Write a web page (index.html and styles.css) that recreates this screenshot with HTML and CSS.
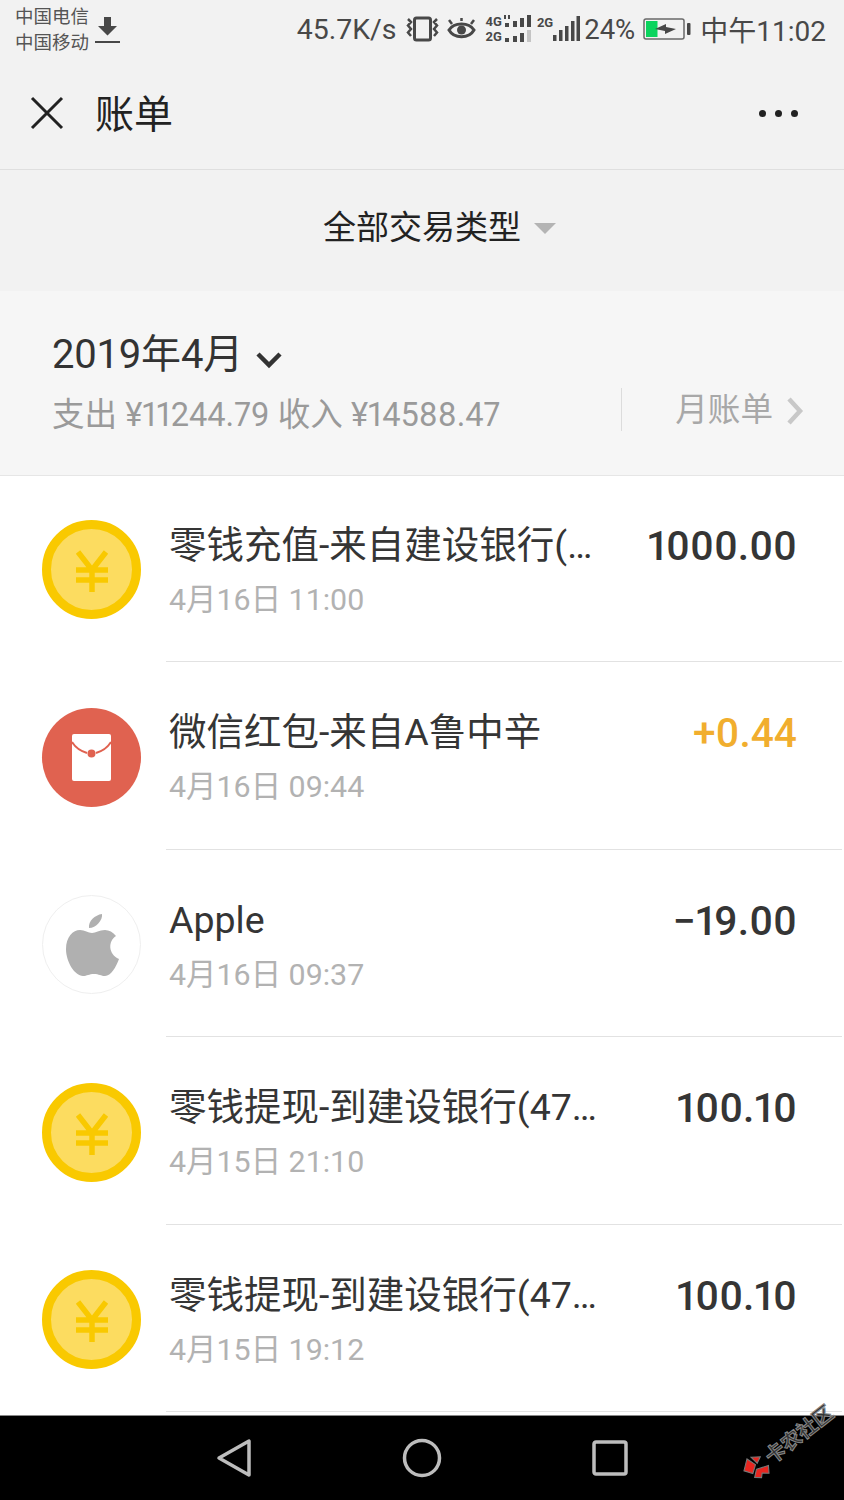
FILE: index.html
```html
<!DOCTYPE html>
<html lang="zh-CN">
<head>
    <meta charset="UTF-8">
    <meta name="viewport" content="width=device-width, initial-scale=1.0">
    <title>账单</title>
    <link rel="stylesheet" href="styles.css">
</head>
<body>
    <div class="status-bar">
        <div class="status-left">
            <div class="carriers">
                <div>中国电信</div>
                <div>中国移动</div>
            </div>
            <svg class="download-icon" width="28" height="30" viewBox="0 0 28 30">
                <path d="M10 2h7v9h6l-9.500 9.500L4 11h6z" fill="#484848"/>
                <rect x="1" y="26" width="25" height="2" fill="#484848"/>
            </svg>
        </div>
        <div class="status-right">
            <span class="speed">45.7K/s</span>
            <svg class="vibrate-icon" width="35" height="28" viewBox="0 0 35 28">
                <rect x="9.500" y="3" width="16" height="22" rx="2" fill="none" stroke="#484848" stroke-width="3"/>
                <path d="M3 4l3 3-3 3.500 3 3.500-3 3.500 3 3.500M32 4l-3 3 3 3.500-3 3.500 3 3.500-3 3.500" fill="none" stroke="#484848" stroke-width="2.500"/>
            </svg>
            <svg class="eye-icon" width="29" height="24" viewBox="0 0 29 24">
                <path d="M2 13c5-8 20-8 25 0-5 9-20 9-25 0z" fill="none" stroke="#484848" stroke-width="3"/>
                <circle cx="14.500" cy="13" r="4.500" fill="#484848"/>
                <path d="M5 7L2 3M24 7l3-4M14.500 4V1" stroke="#484848" stroke-width="2.500"/>
            </svg>
            <div class="signal-double">
                <div class="signal-line">
                    <span class="net-label">4G</span>
                    <svg width="30" height="13" viewBox="0 0 30 13">
                        <path d="M1 0h2v4H1zM5 0h2v4H5z" fill="#484848"/>
                        <rect x="2" y="8" width="4" height="4" fill="#484848"/>
                        <rect x="10" y="6" width="4" height="6" fill="#484848"/>
                        <rect x="17" y="3" width="4" height="9" fill="#484848"/>
                        <rect x="24" y="0" width="4" height="12" fill="#484848"/>
                    </svg>
                </div>
                <div class="signal-line">
                    <span class="net-label">2G</span>
                    <svg width="30" height="13" viewBox="0 0 30 13">
                        <rect x="2" y="8" width="4" height="4" fill="#484848"/>
                        <rect x="10" y="6" width="4" height="6" fill="#484848"/>
                        <rect x="17" y="3" width="4" height="9" fill="#484848"/>
                        <rect x="24" y="0" width="4" height="12" fill="#c4c4c4"/>
                    </svg>
                </div>
            </div>
            <div class="signal-single">
                <span class="net-label net-label-top">2G</span>
                <svg width="28" height="26" viewBox="0 0 28 26">
                    <rect x="1" y="19" width="3.500" height="6" fill="#484848"/>
                    <rect x="7" y="14" width="3.500" height="11" fill="#484848"/>
                    <rect x="13" y="10" width="3.500" height="15" fill="#484848"/>
                    <rect x="19" y="5" width="3.500" height="20" fill="#484848"/>
                    <rect x="24.500" y="0" width="3.500" height="25" fill="#484848"/>
                </svg>
            </div>
            <span class="battery-text">24%</span>
            <svg class="battery-icon" width="48" height="24" viewBox="0 0 48 24">
                <rect x="1" y="2" width="40" height="20" rx="2" fill="none" stroke="#6a6a6a" stroke-width="1.500"/>
                <rect x="3" y="4" width="11.500" height="16" fill="#0bd45e"/>
                <path d="M12 12l11-5v3l10 2-11 5v-3z" fill="#484848"/>
                <rect x="44" y="6" width="3.500" height="12" rx="1" fill="#484848"/>
            </svg>
            <span class="clock">中午11:02</span>
        </div>
    </div>

    <div class="nav-bar">
        <svg class="close-icon" width="34" height="34" viewBox="0 0 34 34">
            <path d="M2 2l30 30M32 2L2 32" stroke="#222" stroke-width="3" fill="none"/>
        </svg>
        <div class="nav-title">账单</div>
        <div class="more-dots"><i></i><i></i><i></i></div>
    </div>

    <div class="filter-bar">
        <span>全部交易类型</span>
        <i class="filter-caret"></i>
    </div>

    <div class="summary">
        <div class="summary-left">
            <div class="month">
                <span>2019年4月</span>
                <svg width="28" height="18" viewBox="0 0 28 18">
                    <path d="M3 3l11 11L25 3" fill="none" stroke="#333" stroke-width="4.500"/>
                </svg>
            </div>
            <div class="totals">支出 ¥11244.79 收入 ¥14588.47</div>
        </div>
        <div class="month-bill">
            <span>月账单</span>
            <svg width="18" height="28" viewBox="0 0 18 28">
                <path d="M3 2l11 12L3 26" fill="none" stroke="#c8c8c8" stroke-width="4.500"/>
            </svg>
        </div>
    </div>

    <div class="list">
        <div class="item">
            <div class="coin">
                <svg width="34" height="42" viewBox="0 0 34 42">
                    <path d="M3 2l14 18L31 2M1 20h32M1 30h32M17 20v22" fill="none" stroke="#f9c900" stroke-width="5.500"/>
                </svg>
            </div>
            <div class="item-body">
                <div class="item-text">
                    <div class="item-title">零钱充值-来自建设银行(…</div>
                    <div class="item-date">4月16日 11:00</div>
                </div>
                <div class="item-amount">1000.00</div>
            </div>
        </div>
        <div class="item">
            <div class="red-packet">
                <svg width="39" height="47" viewBox="0 0 39 47">
                    <path d="M0 2a2 2 0 0 1 2-2h35a2 2 0 0 1 2 2v43a2 2 0 0 1-2 2H2a2 2 0 0 1-2-2z" fill="#fff"/>
                    <path d="M0 8c3 5 8 9 15 11M39 8c-3 5-8 9-15 11" fill="none" stroke="#e06250" stroke-width="2"/>
                    <circle cx="19.500" cy="19.500" r="4" fill="#e06250"/>
                </svg>
            </div>
            <div class="item-body">
                <div class="item-text">
                    <div class="item-title">微信红包-来自A鲁中辛</div>
                    <div class="item-date">4月16日 09:44</div>
                </div>
                <div class="item-amount income">+0.44</div>
            </div>
        </div>
        <div class="item">
            <div class="apple">
                <svg width="54" height="66" viewBox="0 0 54 66">
                    <path d="M37 2c1 6-6 14-13 14-1-7 6-13 13-14z" fill="#b0b0b0"/>
                    <path d="M15 18c5 0 8 3 12 3s7-3 13-3c4 0 8 2 11 6-8 5-8 18 3 23-3 8-8 17-14 17-4 0-6-2-11-2s-7 2-11 2C10 64 1 50 1 37c0-12 7-19 14-19z" fill="#b0b0b0"/>
                </svg>
            </div>
            <div class="item-body">
                <div class="item-text">
                    <div class="item-title">Apple</div>
                    <div class="item-date">4月16日 09:37</div>
                </div>
                <div class="item-amount">−19.00</div>
            </div>
        </div>
        <div class="item">
            <div class="coin">
                <svg width="34" height="42" viewBox="0 0 34 42">
                    <path d="M3 2l14 18L31 2M1 20h32M1 30h32M17 20v22" fill="none" stroke="#f9c900" stroke-width="5.500"/>
                </svg>
            </div>
            <div class="item-body">
                <div class="item-text">
                    <div class="item-title">零钱提现-到建设银行(47…</div>
                    <div class="item-date">4月15日 21:10</div>
                </div>
                <div class="item-amount">100.10</div>
            </div>
        </div>
        <div class="item">
            <div class="coin">
                <svg width="34" height="42" viewBox="0 0 34 42">
                    <path d="M3 2l14 18L31 2M1 20h32M1 30h32M17 20v22" fill="none" stroke="#f9c900" stroke-width="5.500"/>
                </svg>
            </div>
            <div class="item-body">
                <div class="item-text">
                    <div class="item-title">零钱提现-到建设银行(47…</div>
                    <div class="item-date">4月15日 19:12</div>
                </div>
                <div class="item-amount">100.10</div>
            </div>
        </div>
    </div>

    <div class="bottom-nav">
        <svg width="36" height="40" viewBox="0 0 36 40">
            <path d="M33 3v34L3 20z" fill="none" stroke="#bdbdbd" stroke-width="3.500" stroke-linejoin="round"/>
        </svg>
        <svg width="40" height="40" viewBox="0 0 40 40">
            <circle cx="20" cy="20" r="17.500" fill="none" stroke="#bdbdbd" stroke-width="3.500"/>
        </svg>
        <svg width="36" height="36" viewBox="0 0 36 36">
            <rect x="2" y="2" width="32" height="32" rx="2" fill="none" stroke="#bdbdbd" stroke-width="3.500"/>
        </svg>
        <div class="watermark">
            <svg width="28" height="28" viewBox="0 0 26 26">
                <path d="M2 9l9-7 3 9-7 5zM15 3l7 5-6 3zM12 15l11 4-4 6-5-4-3 3-5-4z" fill="#e8251f" stroke="#777" stroke-width="1"/>
            </svg>
            <span>卡农社区</span>
        </div>
    </div>
</body>
</html>
```

FILE: styles.css
```css
* {
    box-sizing: border-box;
}
body {
    margin: 0;
    width: 844px;
    height: 1500px;
    overflow: hidden;
    background: #fff;
    font-family: Roboto, "Noto Sans CJK SC", sans-serif;
    display: flex;
    flex-direction: column;
}
.status-bar {
    height: 60px;
    background: #f2f2f2;
    display: flex;
    justify-content: space-between;
    align-items: center;
    padding: 0 18px 2px 15px;
    color: #484848;
}
.status-left {
    display: flex;
    align-items: center;
    gap: 5px;
    margin-top: 2px;
}
.carriers {
    font-size: 18.500px;
    line-height: 26px;
    color: #555;
}
.status-right {
    display: flex;
    align-items: center;
}
.speed {
    font-size: 28.500px;
    margin-right: 8px;
}
.vibrate-icon {
    margin-right: 7px;
}
.eye-icon {
    margin-right: 10px;
}
.signal-double {
    display: flex;
    flex-direction: column;
    gap: 1px;
    margin-right: 4px;
}
.signal-line {
    display: flex;
    align-items: center;
    gap: 1px;
    height: 14px;
}
.net-label {
    font-size: 13px;
    font-weight: 700;
    line-height: 14px;
    color: #484848;
}
.signal-single {
    display: flex;
    align-items: flex-end;
    margin-right: 4px;
}
.net-label-top {
    align-self: flex-start;
    margin-right: -1px;
}
.battery-text {
    font-size: 27.500px;
    margin-right: 8px;
}
.battery-icon {
    margin-right: 9px;
}
.clock {
    font-size: 28px;
}
.nav-bar {
    height: 110px;
    background: #f2f2f2;
    border-bottom: 1px solid #dfdfdf;
    display: flex;
    align-items: center;
    padding: 0 46px 4px 30px;
}
.nav-title {
    font-size: 39px;
    color: #222;
    margin: -3px 0 0 31px;
    flex: 1;
}
.more-dots {
    display: flex;
    gap: 9px;
    margin-top: 1px;
}
.more-dots i {
    width: 7px;
    height: 7px;
    border-radius: 50%;
    background: #222;
}
.filter-bar {
    height: 121px;
    background: #f2f2f2;
    display: flex;
    align-items: center;
    justify-content: center;
    gap: 13px;
    padding: 0 0 12px 35px;
    font-size: 33px;
    color: #222;
}
.filter-caret {
    width: 0;
    height: 0;
    border-left: 11px solid transparent;
    border-right: 11px solid transparent;
    border-top: 11px solid #b4b4b4;
    margin-top: 8px;
}
.summary {
    height: 185px;
    background: #f6f6f6;
    border-bottom: 1px solid #e6e6e6;
    display: flex;
    justify-content: space-between;
    align-items: flex-end;
    padding: 0 40px 39px 52px;
}
.summary-left {
    display: flex;
    flex-direction: column;
}
.month {
    display: flex;
    align-items: center;
    gap: 12px;
    font-size: 40px;
    letter-spacing: -0.200px;
    color: #333;
    line-height: 50px;
    margin-bottom: 15px;
}
.month svg {
    margin-top: 9px;
}
.totals {
    font-size: 32.600px;
    font-feature-settings: "pnum";
    line-height: 42px;
    margin-top: -1px;
    color: #9a9a9a;
}
.month-bill {
    width: 183px;
    height: 43px;
    margin-bottom: 5px;
    border-left: 1px solid #dcdcdc;
    display: flex;
    align-items: center;
    justify-content: flex-end;
    gap: 13px;
    font-size: 32.600px;
    color: #a8a8a8;
}
.month-bill span {
    margin-top: -6px;
}
.month-bill svg {
    margin-top: 3px;
}
.list {
    flex: 1;
    margin-top: -1.500px;
}
.item {
    height: 187.500px;
    display: flex;
    align-items: center;
    padding-left: 42px;
}
.coin,
.red-packet,
.apple {
    width: 99px;
    height: 99px;
    border-radius: 50%;
    flex: none;
    display: flex;
    align-items: center;
    justify-content: center;
    margin-top: 3px;
}
.coin {
    background: #fcdc60;
    border: 9px solid #f9c900;
}
.coin svg {
    margin-top: 3px;
}
.red-packet {
    background: #e06250;
}
.apple {
    border: 1px solid #efefef;
}
.item-body {
    flex: 1;
    height: 100%;
    margin-left: 25px;
    padding: 0 45px 0 3px;
    margin-right: 2px;
    border-bottom: 1px solid #e2e2e2;
    display: flex;
    justify-content: space-between;
    align-items: flex-start;
}
.item-text {
    padding-top: 42px;
}
.item-title {
    font-size: 37.500px;
    line-height: 56px;
    color: #353535;
    white-space: nowrap;
}
.item-date {
    font-size: 30.400px;
    line-height: 40px;
    color: #b2b2b2;
    margin-top: 7px;
}
.item-amount {
    font-size: 40.700px;
    font-weight: 500;
    font-feature-settings: "pnum";
    line-height: 56px;
    color: #353535;
    padding-top: 43px;
}
.item-amount.income {
    color: #f1ae2e;
}
.bottom-nav {
    height: 85px;
    background: #000;
    border-top: 1px solid #888;
    display: flex;
    align-items: center;
    position: relative;
    padding: 0 216px;
    justify-content: space-between;
}
.watermark {
    position: absolute;
    left: 743px;
    top: 37px;
    display: flex;
    align-items: center;
    gap: 0;
    transform: rotate(-38deg);
    transform-origin: 12px 16px;
    font-size: 20px;
    font-weight: 700;
    color: #333;
    -webkit-text-stroke: 1px #888;
    white-space: nowrap;
}
```
